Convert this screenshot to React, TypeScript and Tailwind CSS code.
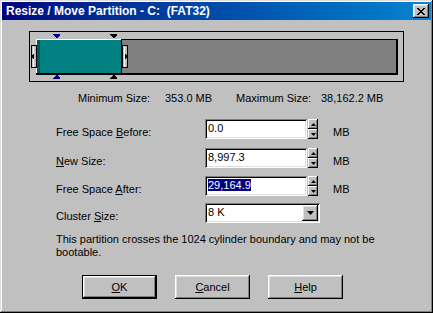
import React from 'react';

// Classic 3D bevels
const RAISED = 'shadow-[inset_-1px_-1px_#000,inset_1px_1px_#fff,inset_-2px_-2px_#808080,inset_2px_2px_#dfdfdf]';
const RAISED_THIN = 'shadow-[inset_-1px_-1px_#000,inset_1px_1px_#fff,inset_-2px_-2px_#808080]';
const SUNKEN = 'shadow-[inset_1px_1px_#808080,inset_-1px_-1px_#fff,inset_2px_2px_#000,inset_-2px_-2px_#dfdfdf]';

function PartitionMap() {
    return (
        <svg width="375" height="51" viewBox="0 0 375 51" shapeRendering="crispEdges">
            {/* outer frame */}
            <rect x="0.5" y="0.5" width="374" height="50" fill="none" stroke="#000" />
            {/* disk bar */}
            <rect x="7" y="8" width="362" height="36" fill="#000" />
            <rect x="8" y="9" width="359" height="33" fill="#808080" />
            {/* partition */}
            <rect x="7" y="8" width="86" height="1" fill="#fff" />
            <rect x="7" y="8" width="1" height="35" fill="#fff" />
            <rect x="8" y="9" width="84" height="33" fill="#008080" />
            <rect x="8" y="9" width="3" height="33" fill="#005a5a" />
            <rect x="7" y="42" width="86" height="2" fill="#000" />
            <rect x="92" y="8" width="1" height="36" fill="#000" />
            {/* left handle */}
            <rect x="2.5" y="14.5" width="5" height="22" fill="#c0c0c0" stroke="#000" />
            <rect x="4" y="16" width="1" height="20" fill="#fff" />
            <polygon points="2,25.5 5,22.5 5,28.5" fill="#000" />
            {/* right handle */}
            <rect x="93.5" y="14.5" width="5" height="22" fill="#c0c0c0" stroke="#000" />
            <rect x="95" y="16" width="1" height="20" fill="#fff" />
            <polygon points="99,25.5 96,22.5 96,28.5" fill="#000" />
            {/* top markers */}
            <rect x="24" y="3" width="7" height="1" fill="#000080" />
            <polygon points="24,4 31,4 27.5,7.5" fill="#000080" />
            <rect x="81" y="3" width="7" height="1" fill="#000" />
            <polygon points="81,4 88,4 84.5,7.5" fill="#000" />
            {/* bottom markers */}
            <rect x="24" y="47" width="7" height="1" fill="#000080" />
            <polygon points="24,47 31,47 27.5,43.5" fill="#000080" />
            <rect x="81" y="47" width="7" height="1" fill="#000" />
            <polygon points="81,47 88,47 84.5,43.5" fill="#000" />
        </svg>
    );
}

function Spinner() {
    return (
        <div className="flex flex-col w-[10px] h-[20px] ml-[1px]">
            <div className={`h-[10px] bg-[#c0c0c0] flex items-center justify-center ${RAISED_THIN}`}>
                <svg width="5" height="3" viewBox="0 0 5 3"><polygon points="0,3 5,3 2.5,0" fill="#000" /></svg>
            </div>
            <div className={`h-[10px] bg-[#c0c0c0] flex items-center justify-center ${RAISED_THIN}`}>
                <svg width="5" height="3" viewBox="0 0 5 3"><polygon points="0,0 5,0 2.5,3" fill="#000" /></svg>
            </div>
        </div>
    );
}

interface FieldRowProps {
    label: React.ReactNode;
    value: string;
    selected?: boolean;
    className?: string;
}

function FieldRow({ label, value, selected = false, className = '' }: FieldRowProps) {
    return (
        <div className={`flex items-start h-[20px] ${className}`}>
            <div className="w-[149px] mt-[7px] leading-[13px]">{label}</div>
            <div className={`w-[102px] h-[20px] bg-white pl-[3px] pt-[3px] leading-[13px] ${SUNKEN}`}>
                <span className={selected ? 'bg-[#000080] text-white' : ''}>{value}</span>
            </div>
            <Spinner />
            <div className="ml-[15px] mt-[7px] leading-[13px]">MB</div>
        </div>
    );
}

function DialogButton({ children, isDefault = false }: { children: React.ReactNode; isDefault?: boolean }) {
    return (
        <button
            className={`h-[24px] bg-[#c0c0c0] flex items-center justify-center leading-[13px] ${isDefault ? 'w-[75px] border border-black' : 'w-[75px]'}`}
        >
            <span className={`w-full h-full flex items-center justify-center ${RAISED}`}>{children}</span>
        </button>
    );
}

export default function App() {
    return (
        <div
            className={`w-[433px] h-[313px] bg-[#c0c0c0] p-[2px] text-[11px] text-black font-['Liberation_Sans',Arial,sans-serif] shadow-[inset_-1px_-1px_#000,inset_1px_1px_#dfdfdf,inset_-2px_-2px_#808080,inset_2px_2px_#fff]`}
        >
            {/* Title bar */}
            <div className="h-[18px] flex items-center justify-between bg-gradient-to-r from-[#000080] to-[#1084d0] pl-[4px] pr-[2px]">
                <span className="text-white font-bold text-[12px] leading-[14px] whitespace-pre">
                    Resize / Move Partition - C:  (FAT32)
                </span>
                <button className={`w-[16px] h-[14px] bg-[#c0c0c0] flex items-center justify-center ${RAISED}`}>
                    <svg width="8" height="7" viewBox="0 0 8 7" shapeRendering="crispEdges">
                        <path d="M0 0h2v1h-2zM6 0h2v1h-2zM1 1h2v1h-2zM5 1h2v1h-2zM2 2h4v1h-4zM3 3h2v1h-2zM2 4h4v1h-4zM1 5h2v1h-2zM5 5h2v1h-2zM0 6h2v1h-2zM6 6h2v1h-2z" fill="#000" />
                    </svg>
                </button>
            </div>

            {/* Body */}
            <div className="pl-[27px] pt-[11px]">
                <PartitionMap />

                <div className="flex mt-[10px] h-[13px] leading-[13px]">
                    <div className="ml-[49px] w-[87px]">Minimum Size:</div>
                    <div className="w-[71px]">353.0 MB</div>
                    <div className="w-[85px]">Maximum Size:</div>
                    <div>38,162.2 MB</div>
                </div>
            </div>

            <div className="pl-[54px] mt-[14px]">
                <FieldRow label={<>Free Space <u>B</u>efore:</>} value="0.0" />
                <FieldRow label={<><u>N</u>ew Size:</>} value="8,997.3" className="mt-[9px]" />
                <FieldRow label={<>Free Space <u>A</u>fter:</>} value="29,164.9" selected className="mt-[8px]" />

                {/* Cluster size combo */}
                <div className="flex items-start h-[20px] mt-[7px]">
                    <div className="w-[149px] mt-[7px] leading-[13px]">Cluster <u>S</u>ize:</div>
                    <div className={`w-[115px] h-[20px] bg-white flex items-start ${SUNKEN}`}>
                        <div className="flex-1 pl-[3px] pt-[3px] leading-[13px]">8 K</div>
                        <div className={`w-[16px] h-[16px] mt-[2px] mr-[2px] bg-[#c0c0c0] flex items-center justify-center ${RAISED}`}>
                            <svg width="7" height="4" viewBox="0 0 7 4"><polygon points="0,0 7,0 3.5,4" fill="#000" /></svg>
                        </div>
                    </div>
                </div>

                <p className="mt-[10px] leading-[13px] w-[340px]">
                    This partition crosses the 1024 cylinder boundary and may not be bootable.
                </p>
            </div>

            {/* Buttons */}
            <div className="flex gap-[18px] pl-[80px] mt-[16px]">
                <DialogButton isDefault><span><u>O</u>K</span></DialogButton>
                <DialogButton><span><u>C</u>ancel</span></DialogButton>
                <DialogButton><span><u>H</u>elp</span></DialogButton>
            </div>
        </div>
    );
}
